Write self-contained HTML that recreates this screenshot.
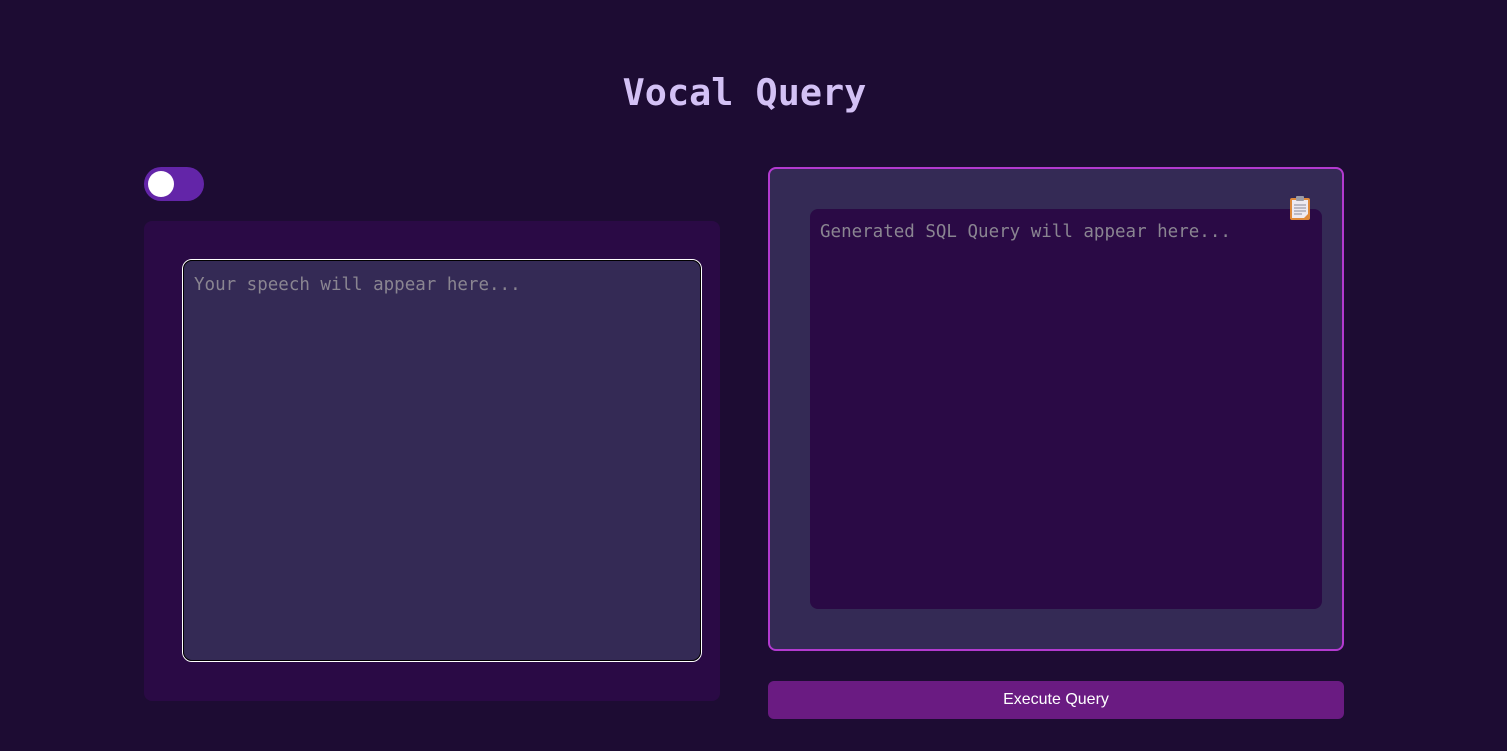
<!DOCTYPE html>
<html><head><meta charset="utf-8"><style>
*{box-sizing:border-box;margin:0;padding:0}
html,body{width:1507px;height:751px;overflow:hidden;background:#1d0c33;font-family:"DejaVu Sans Mono","Liberation Mono",monospace}
h1{position:absolute;left:-9px;width:1507px;top:69px;text-align:center;font-size:36.8px;font-weight:bold;color:#d3c1f5;line-height:48px}
.toggle{position:absolute;left:144px;top:167px;width:60px;height:34px;border-radius:17px;background:#6325a8}
.toggle:after{content:"";position:absolute;left:4px;top:4px;width:26px;height:26px;border-radius:50%;background:#fff}
.lp{position:absolute;left:144px;top:221px;width:576px;height:480px;background:#2a0a45;border-radius:8px}
.ta{position:absolute;left:38px;top:38px;width:520px;height:403px;background:#342a55;border:1px solid #fff;border-radius:10px;outline:1px solid #000;outline-offset:-2px;padding:15px 11px;color:#8a8591;font-size:17.5px;line-height:20px}
.rp{position:absolute;left:768px;top:167px;width:576px;height:484px;background:#342a55;border:2px solid #b33ad0;border-radius:8px}
.inner{position:absolute;left:40px;top:40px;width:512px;height:400px;background:#2a0a45;border-radius:8px;padding:13px 10px;color:#8a8591;font-size:17.5px;line-height:20px}
.clip{position:absolute;left:519px;top:26px}
.btn{position:absolute;left:768px;top:681px;width:576px;height:38px;background:#6a1b82;border-radius:6px;color:#fff;font-family:"Liberation Sans",sans-serif;font-size:16px;text-align:center;line-height:38px}
</style></head><body>
<h1>Vocal Query</h1>
<div class="toggle"></div>
<div class="lp"><div class="ta">Your speech will appear here...</div></div>
<div class="rp"><div class="inner">Generated SQL Query will appear here...</div>
<svg class="clip" width="22" height="26" viewBox="0 0 22 26"><rect x="1" y="3" width="20" height="22" rx="2" fill="#e08a3a"/><rect x="3" y="5" width="16" height="18" fill="#eeeaf2"/><path d="M15 23 L19 19 L19 23Z" fill="#e08a3a"/><rect x="7" y="1" width="8" height="5" rx="1" fill="#9a9aa5"/><g stroke="#8a8a9a" stroke-width="1"><line x1="5" y1="10" x2="17" y2="10"/><line x1="5" y1="13" x2="17" y2="13"/><line x1="5" y1="16" x2="17" y2="16"/><line x1="5" y1="19" x2="13" y2="19"/></g></svg>
</div>
<div class="btn">Execute Query</div>
</body></html>
